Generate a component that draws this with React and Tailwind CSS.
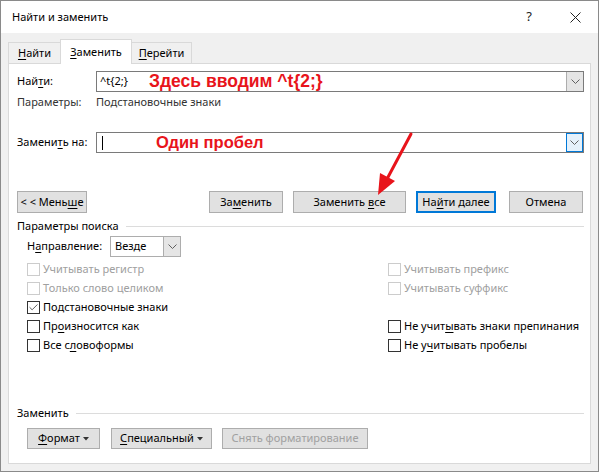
import { Check } from 'lucide-react';

const ui = { fontFamily: '"Noto Sans", "Open Sans", sans-serif' };
const red = { fontFamily: '"Liberation Sans", Arial, sans-serif' };

function Btn({ w, children, blue, disabled, className = '' }) {
  return (
    <div
      className={`h-full flex items-center justify-center bg-[#e1e1e1] text-[11px] ${
        blue ? 'border-2 border-[#0078d7]' : 'border border-[#adadad]'
      } ${disabled ? 'text-[#a0a0a0]' : 'text-[#000]'} ${className}`}
      style={{ width: w }}
    >
      <span className="whitespace-nowrap">{children}</span>
    </div>
  );
}

function Chevron() {
  return (
    <svg width="9" height="6" viewBox="0 0 9 6">
      <path d="M0.5 0.5 L4.5 4.5 L8.5 0.5" fill="none" stroke="#606060" strokeWidth="1" />
    </svg>
  );
}

function Caret() {
  return (
    <svg width="6" height="4" viewBox="0 0 6 4" className="inline-block align-middle ml-[3px]">
      <path d="M0 0 H6 L3 3.5 Z" fill="#333" />
    </svg>
  );
}

function Box({ checked, disabled }) {
  return (
    <div
      className={`w-[13px] h-[13px] shrink-0 border flex items-center justify-center bg-white ${
        disabled ? 'border-[#cccccc]' : 'border-[#333333]'
      }`}
    >
      {checked && <Check size={11} strokeWidth={1.6} className="text-[#222]" />}
    </div>
  );
}

function CheckRow({ children, checked, disabled }) {
  return (
    <div className="flex items-center gap-[3px] h-[19px]">
      <Box checked={checked} disabled={disabled} />
      <span className={`whitespace-nowrap ${disabled ? 'text-[#a0a0a0]' : 'text-[#000]'}`}>{children}</span>
    </div>
  );
}

function U({ children }) {
  return <span className="underline underline-offset-2">{children}</span>;
}

export default function App() {
  return (
    <div className="w-[601px] h-[473px] bg-white" style={ui}>
      <div className="w-[599px] h-[472px] border border-[#8a8a8a] bg-[#f0f0f0] flex flex-col relative">
        {/* title bar */}
        <div className="h-[32px] bg-white flex items-center pl-[11px] shrink-0">
          <span className="text-[11px] text-black">Найти и заменить</span>
          <span className="ml-auto text-[13px] text-[#222] mr-[38px]">?</span>
          <svg width="11" height="11" viewBox="0 0 11 11" className="mr-[17px]">
            <path d="M0.5 0.5 L10.5 10.5 M10.5 0.5 L0.5 10.5" stroke="#222" strokeWidth="1" />
          </svg>
        </div>

        {/* tabs */}
        <div className="h-[30px] flex items-end pl-[7px] shrink-0 relative z-10 text-[11px]">
          <div className="w-[52px] h-[21px] border-t border-l border-[#d9d9d9] flex items-center justify-center">
            <span><U>Н</U>айти</span>
          </div>
          <div className="w-[72px] h-[25px] bg-white border border-b-0 border-[#d9d9d9] flex items-center justify-center -mb-px">
            <span><U>З</U>аменить</span>
          </div>
          <div className="w-[60px] h-[21px] border-t border-r border-[#d9d9d9] flex items-center justify-center">
            <span><U>П</U>ерейти</span>
          </div>
        </div>

        {/* panel */}
        <div className="ml-[7px] w-[583px] h-[401px] bg-white border border-[#d9d9d9] flex flex-col pl-[8px] pr-[6px] text-[11px] text-black relative">
          {/* find */}
          <div className="mt-[7px] h-[21px] flex items-center">
            <span className="w-[79px]">Най<U>т</U>и:</span>
            <div className="flex-1 h-full border border-[#7a7a7a] flex items-center">
              <span className="ml-[3px] w-[49px]">^t{'{'}2;{'}'}</span>
              <span className="text-[#e8141b] text-[17.5px] font-bold whitespace-nowrap" style={red}>
                Здесь вводим ^t{'{'}2;{'}'}
              </span>
              <div className="ml-auto w-[17px] h-[19px] bg-[#e5e5e5] border-l border-[#adadad] flex items-center justify-center">
                <Chevron />
              </div>
            </div>
          </div>
          <div className="h-[20px] flex items-center text-[#333]">
            <span className="w-[79px]">Параметры:</span>
            <span>Подстановочные знаки</span>
          </div>

          {/* replace */}
          <div className="mt-[20px] h-[21px] flex items-center">
            <span className="w-[79px]">Замени<U>т</U>ь на:</span>
            <div className="flex-1 h-full border border-[#7a7a7a] flex items-center">
              <div className="ml-[5px] w-px h-[14px] bg-black" />
              <span className="ml-[53px] text-[#e8141b] text-[16.5px] font-bold whitespace-nowrap" style={red}>
                Один пробел
              </span>
              <div className="ml-auto w-[17px] h-[19px] bg-[#e5f1fb] border border-[#0078d7] flex items-center justify-center">
                <Chevron />
              </div>
            </div>
          </div>

          {/* buttons */}
          <div className="mt-[38px] h-[22px] flex">
            <Btn w={70}>{'< < Мень'}<U>ш</U>е</Btn>
            <Btn w={74} className="ml-[122px]">За<U>м</U>енить</Btn>
            <Btn w={113} className="ml-[10px]">Заменить <U>в</U>се</Btn>
            <Btn w={80} blue className="ml-[10px]">На<U>й</U>ти далее</Btn>
            <Btn w={74} className="ml-[13px]">Отмена</Btn>
          </div>

          {/* search params */}
          <div className="mt-[6px] h-[14px] flex items-center">
            <span>Параметры поиска</span>
            <div className="flex-1 h-px bg-[#dcdcdc] ml-[7px]" />
          </div>
          <div className="mt-[3px] h-[21px] flex items-center pl-[10px]">
            <span className="w-[83px]">Н<U>а</U>правление:</span>
            <div className="w-[71px] h-full border border-[#adadad] flex items-center">
              <span className="ml-[4px]">Везде</span>
              <div className="ml-auto w-[17px] h-full bg-[#e5e5e5] border-l border-[#adadad] flex items-center justify-center">
                <Chevron />
              </div>
            </div>
          </div>
          <div className="mt-[3px] flex pl-[10px]">
            <div className="w-[361px] flex flex-col">
              <CheckRow disabled>Учитывать регистр</CheckRow>
              <CheckRow disabled>Только слово целиком</CheckRow>
              <CheckRow checked>Подстановочные знаки</CheckRow>
              <CheckRow>Пр<U>о</U>износится как</CheckRow>
              <CheckRow>Все с<U>л</U>овоформы</CheckRow>
            </div>
            <div className="flex flex-col">
              <CheckRow disabled>Учитывать префикс</CheckRow>
              <CheckRow disabled>Учитывать суффикс</CheckRow>
              <div className="h-[19px]" />
              <CheckRow>Не учит<U>ы</U>вать знаки препинания</CheckRow>
              <CheckRow>Не у<U>ч</U>итывать пробелы</CheckRow>
            </div>
          </div>

          {/* replace group */}
          <div className="mt-[51px] h-[14px] flex items-center">
            <span>Заменить</span>
            <div className="flex-1 h-px bg-[#dcdcdc] ml-[7px]" />
          </div>
          <div className="mt-[8px] h-[21px] flex pl-[10px]">
            <Btn w={73}><U>Ф</U>ормат<Caret /></Btn>
            <Btn w={101} className="ml-[11px]"><U>С</U>пециальный<Caret /></Btn>
            <Btn w={146} disabled className="ml-[10px]">Снять форматирование</Btn>
          </div>
        </div>

        {/* red annotation arrow */}
        <svg className="absolute left-0 top-0 pointer-events-none" width="599" height="472">
          <line x1="410" y1="133" x2="386" y2="178" stroke="#e8141b" strokeWidth="3" strokeLinecap="round" />
          <path d="M377 194 L379 172 L394 180 Z" fill="#e8141b" />
        </svg>
      </div>
    </div>
  );
}
